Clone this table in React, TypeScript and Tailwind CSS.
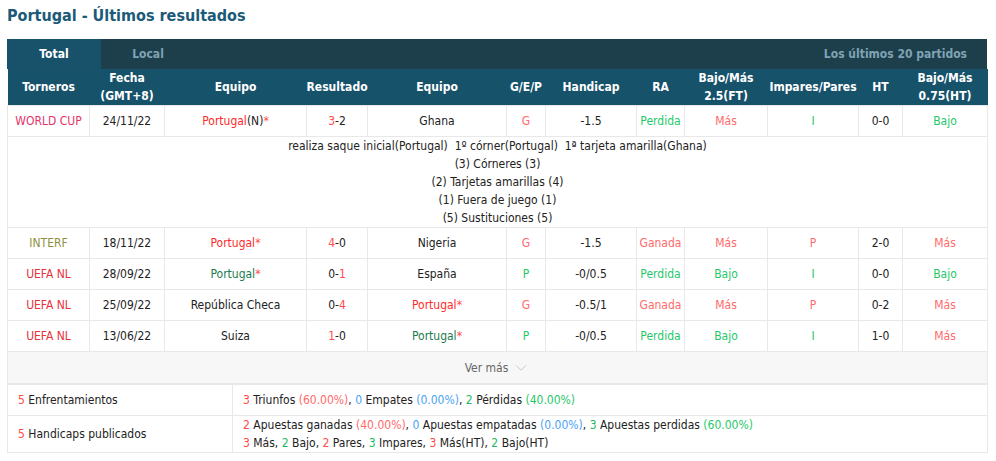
import { ChevronDown } from "lucide-react"

type Row = {
  liga: string
  ligaColor: string
  fecha: string
  local: React.ReactNode
  res: React.ReactNode
  visit: React.ReactNode
  gep: string
  hcp: string
  ra: string
  bm: string
  ip: string
  ht: string
  bmht: string
}

const red = "text-[#ff6a6a]"
const green = "text-[#1fc86a]"

const Pt = ({ win }: { win: boolean }) => (
  <span>
    <span className={win ? "text-[#ff2a2a]" : "text-[#1a7a4c]"}>Portugal</span>
    <span className="text-[#ff4a4a]">*</span>
  </span>
)

const rows: Row[] = [
  {
    liga: "INTERF",
    ligaColor: "text-[#8f8f3f]",
    fecha: "18/11/22",
    local: <Pt win />,
    res: (
      <>
        <span className="text-[#ff4a4a]">4</span>-0
      </>
    ),
    visit: "Nigeria",
    gep: "G",
    hcp: "-1.5",
    ra: "Ganada",
    bm: "Más",
    ip: "P",
    ht: "2-0",
    bmht: "Más",
  },
  {
    liga: "UEFA NL",
    ligaColor: "text-[#e8303c]",
    fecha: "28/09/22",
    local: <Pt win={false} />,
    res: (
      <>
        0-<span className="text-[#ff4a4a]">1</span>
      </>
    ),
    visit: "España",
    gep: "P",
    hcp: "-0/0.5",
    ra: "Perdida",
    bm: "Bajo",
    ip: "I",
    ht: "0-0",
    bmht: "Bajo",
  },
  {
    liga: "UEFA NL",
    ligaColor: "text-[#e8303c]",
    fecha: "25/09/22",
    local: "República Checa",
    res: (
      <>
        0-<span className="text-[#ff4a4a]">4</span>
      </>
    ),
    visit: <Pt win />,
    gep: "G",
    hcp: "-0.5/1",
    ra: "Ganada",
    bm: "Más",
    ip: "P",
    ht: "0-2",
    bmht: "Más",
  },
  {
    liga: "UEFA NL",
    ligaColor: "text-[#e8303c]",
    fecha: "13/06/22",
    local: "Suiza",
    res: (
      <>
        <span className="text-[#ff4a4a]">1</span>-0
      </>
    ),
    visit: <Pt win={false} />,
    gep: "P",
    hcp: "-0/0.5",
    ra: "Perdida",
    bm: "Bajo",
    ip: "I",
    ht: "1-0",
    bmht: "Más",
  },
]

// red for a good result, green for a bad one
const col = (v: string) => (v === "G" || v === "Ganada" || v === "Más" ? red : green)

const widths = [82, 75, 142, 61, 139, 39, 91, 48, 83, 91, 44, 85]

function DataRow({ r }: { r: Row }) {
  const td = "h-[31px] border border-[#e8e8e8] text-center p-0"
  return (
    <tr>
      <td className={`${td} ${r.ligaColor}`}>{r.liga}</td>
      <td className={td}>{r.fecha}</td>
      <td className={td}>{r.local}</td>
      <td className={td}>{r.res}</td>
      <td className={td}>{r.visit}</td>
      <td className={`${td} ${col(r.gep)}`}>{r.gep}</td>
      <td className={td}>{r.hcp}</td>
      <td className={`${td} ${col(r.ra)}`}>{r.ra}</td>
      <td className={`${td} ${col(r.bm)}`}>{r.bm}</td>
      <td className={`${td} ${r.ip === "P" ? red : green}`}>{r.ip}</td>
      <td className={td}>{r.ht}</td>
      <td className={`${td} ${col(r.bmht)}`}>{r.bmht}</td>
    </tr>
  )
}

export default function App() {
  const th = "font-bold text-white text-center p-0 leading-[18px]"
  const td = "h-[31px] border border-[#e8e8e8] text-center p-0"
  return (
    <div className="w-[996px] h-[461px] bg-white px-[7px] pt-[4px] text-[12px] text-[#222] font-['DejaVu_Sans_Condensed','DejaVu_Sans',sans-serif]">
      <h2 className="text-[16px] font-bold text-[#1b5a78] h-[35px] leading-[24px]">
        Portugal - Últimos resultados
      </h2>

      <div className="w-[980px]">
        <div className="flex h-[30px] bg-[#1d3e4b] font-bold items-stretch">
          <div className="w-[94px] bg-[#17516a] text-white flex items-center justify-center">Total</div>
          <div className="w-[94px] text-[#7fa3b4] flex items-center justify-center">Local</div>
          <div className="flex-1 text-[#7fa3b4] flex items-center justify-end pr-[20px]">Los últimos 20 partidos</div>
        </div>

        <table className="table-fixed border-collapse w-[980px]">
          <colgroup>
            {widths.map((w, i) => (
              <col key={i} style={{ width: w }} />
            ))}
          </colgroup>
          <thead>
            <tr className="h-[36px] bg-[#17526b]">
              <th className={th}>Torneros</th>
              <th className={th}>
                Fecha
                <br />
                (GMT+8)
              </th>
              <th className={th}>Equipo</th>
              <th className={th}>Resultado</th>
              <th className={th}>Equipo</th>
              <th className={th}>G/E/P</th>
              <th className={th}>Handicap</th>
              <th className={th}>RA</th>
              <th className={th}>
                Bajo/Más
                <br />
                2.5(FT)
              </th>
              <th className={th}>Impares/Pares</th>
              <th className={th}>HT</th>
              <th className={th}>
                Bajo/Más
                <br />
                0.75(HT)
              </th>
            </tr>
          </thead>
          <tbody>
            <tr>
              <td className={`${td} text-[#e5336a]`}>WORLD CUP</td>
              <td className={td}>24/11/22</td>
              <td className={td}>
                <span className="text-[#ff2a2a]">Portugal</span>(N)<span className="text-[#ff4a4a]">*</span>
              </td>
              <td className={td}>
                <span className="text-[#ff4a4a]">3</span>-2
              </td>
              <td className={td}>Ghana</td>
              <td className={`${td} ${red}`}>G</td>
              <td className={td}>-1.5</td>
              <td className={`${td} ${green}`}>Perdida</td>
              <td className={`${td} ${red}`}>Más</td>
              <td className={`${td} ${green}`}>I</td>
              <td className={td}>0-0</td>
              <td className={`${td} ${green}`}>Bajo</td>
            </tr>
            <tr>
              <td colSpan={12} className="border border-[#e8e8e8] text-center leading-[18px] p-0">
                <div>realiza saque inicial(Portugal)&nbsp; 1º córner(Portugal)&nbsp; 1ª tarjeta amarilla(Ghana)</div>
                <div>(3) Córneres (3)</div>
                <div>(2) Tarjetas amarillas (4)</div>
                <div>(1) Fuera de juego (1)</div>
                <div>(5) Sustituciones (5)</div>
              </td>
            </tr>
            {rows.map((r, i) => (
              <DataRow key={i} r={r} />
            ))}
            <tr>
              <td colSpan={12} className="h-[32px] border border-[#e8e8e8] bg-[#f7f7f7] text-center text-[#666]">
                <span className="inline-flex items-center gap-[4px]">
                  Ver más
                  <ChevronDown size={18} strokeWidth={1} className="text-[#bbb]" />
                </span>
              </td>
            </tr>
          </tbody>
        </table>

        <table className="table-fixed border-collapse w-[980px]">
          <colgroup>
            <col style={{ width: 225 }} />
            <col style={{ width: 755 }} />
          </colgroup>
          <tbody>
            <tr className="h-[31px]">
              <td className="border border-[#e8e8e8] pl-[10px]">
                <span className="text-[#ff4a4a]">5</span> Enfrentamientos
              </td>
              <td className="border border-[#e8e8e8] pl-[10px]">
                <span className="text-[#ff4a4a]">3</span> Triunfos <span className="text-[#ff6a6a]">(60.00%)</span>,{" "}
                <span className="text-[#4aa3f5]">0</span> Empates <span className="text-[#4aa3f5]">(0.00%)</span>,{" "}
                <span className="text-[#1fb864]">2</span> Pérdidas <span className="text-[#1fc86a]">(40.00%)</span>
              </td>
            </tr>
            <tr className="h-[37px]">
              <td className="border border-[#e8e8e8] pl-[10px]">
                <span className="text-[#ff4a4a]">5</span> Handicaps publicados
              </td>
              <td className="border border-[#e8e8e8] pl-[10px] leading-[18px]">
                <div>
                  <span className="text-[#ff4a4a]">2</span> Apuestas ganadas <span className="text-[#ff6a6a]">(40.00%)</span>,{" "}
                  <span className="text-[#4aa3f5]">0</span> Apuestas empatadas <span className="text-[#4aa3f5]">(0.00%)</span>,{" "}
                  <span className="text-[#1fb864]">3</span> Apuestas perdidas <span className="text-[#1fc86a]">(60.00%)</span>
                </div>
                <div>
                  <span className="text-[#ff4a4a]">3</span> Más, <span className="text-[#1fb864]">2</span> Bajo,{" "}
                  <span className="text-[#ff4a4a]">2</span> Pares, <span className="text-[#1fb864]">3</span> Impares,{" "}
                  <span className="text-[#ff4a4a]">3</span> Más(HT), <span className="text-[#1fb864]">2</span> Bajo(HT)
                </div>
              </td>
            </tr>
          </tbody>
        </table>
      </div>
    </div>
  )
}
